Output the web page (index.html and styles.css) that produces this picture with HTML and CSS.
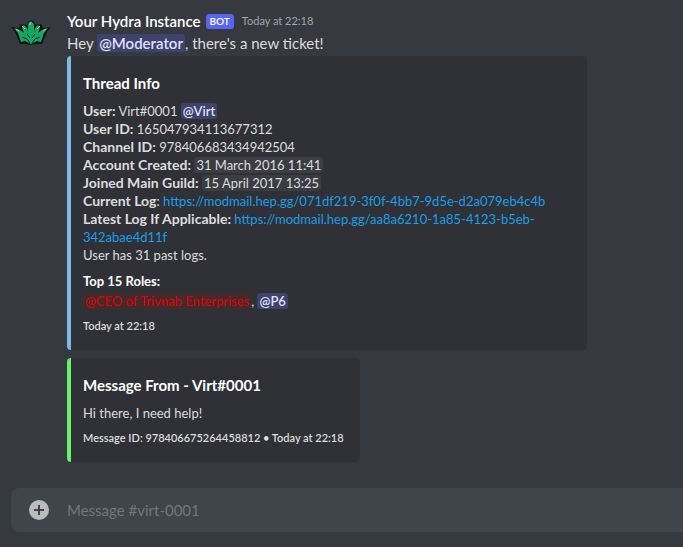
FILE: index.html
```html
<!DOCTYPE html>
<html lang="en">
<head>
    <meta charset="UTF-8">
    <meta name="viewport" content="width=device-width, initial-scale=1.0">
    <title>#virt-0001</title>
    <link rel="stylesheet" href="styles.css">
</head>
<body>
    <main class="chat">
        <!-- Bot message -->
        <article class="message">
            <svg class="avatar" viewBox="0 0 40 40" aria-hidden="true">
                <path class="crest-outline" d="M0 13 L8 14 L10 10 L16 11 L17 8 L20 6 L23 8 L24 11 L30 10 L32 14 L40 13 L36 18 L34 23 L31 30 L25 30 L20 31 L15 30 L9 30 L6 23 L4 18 Z"/>
                <path class="crest" d="M3 14 L9 16 L13 19 L11 13 L13 11 L16 14 L17 18 L17 10 L20 7 L23 10 L23 18 L24 14 L27 11 L29 13 L27 19 L31 16 L37 14 L33 19 L30 28 L26 27 L20 30 L14 27 L10 28 L7 19 Z"/>
                <path class="crest-lines" d="M11 23 L16 25 L19 29 M29 23 L24 25 L21 29 M16 20 L19 24 M24 20 L21 24"/>
                <path class="crest-shine" d="M11 12 L14 15 M29 12 L26 15 M19 8 V11 M5 15 L8 17 M35 15 L32 17"/>
            </svg>
            <div class="content">
                <header class="message-header">
                    <h1 class="username">Your Hydra Instance</h1>
                    <span class="bot-tag">BOT</span>
                    <time class="timestamp">Today at 22:18</time>
                </header>
                <p class="message-text">Hey <span class="mention">@Moderator</span>, there's a new ticket!</p>

                <!-- Thread embed -->
                <section class="embed embed-thread">
                    <h2 class="embed-title">Thread Info</h2>
                    <div class="embed-text">
                        <strong>User:</strong> Virt#0001 <span class="mention">@Virt</span><br>
                        <strong>User ID:</strong> 165047934113677312<br>
                        <strong>Channel ID:</strong> 978406683434942504<br>
                        <strong>Account Created:</strong> <time class="date">31 March 2016 11:41</time><br>
                        <strong>Joined Main Guild:</strong> <time class="date">15 April 2017 13:25</time><br>
                        <strong>Current Log</strong>: <a href="https://modmail.hep.gg/071df219-3f0f-4bb7-9d5e-d2a079eb4c4b">https://modmail.hep.gg/071df219-3f0f-4bb7-9d5e-d2a079eb4c4b</a><br>
                        <strong>Latest Log If Applicable:</strong> <a href="https://modmail.hep.gg/aa8a6210-1a85-4123-b5eb-342abae4d11f">https://modmail.hep.gg/aa8a6210-1a85-4123-b5eb-<wbr>342abae4d11f</a><br>
                        User has 31 past logs.
                    </div>
                    <h3 class="field-name">Top 15 Roles:</h3>
                    <p class="field-value"><span class="mention mention-red">@CEO of Trivnab Enterprises</span>, <span class="mention">@P6</span></p>
                    <footer class="embed-footer">Today at 22:18</footer>
                </section>

                <!-- Forwarded message embed -->
                <section class="embed embed-message">
                    <h2 class="embed-title">Message From - Virt#0001</h2>
                    <p class="embed-text">Hi there, I need help!</p>
                    <footer class="embed-footer">Message ID: 978406675264458812 • Today at 22:18</footer>
                </section>
            </div>
        </article>

        <!-- Message box -->
        <form class="composer">
            <button type="button" class="attach" aria-label="Upload a file">
                <svg viewBox="0 0 20 20" aria-hidden="true">
                    <circle cx="10" cy="10" r="10"/>
                    <path d="M10 5 V15 M5 10 H15"/>
                </svg>
            </button>
            <input type="text" class="composer-input" placeholder="Message #virt-0001" aria-label="Message #virt-0001">
        </form>
    </main>
</body>
</html>
```

FILE: styles.css
```css
* {
    box-sizing: border-box;
}

body {
    margin: 0;
    background-color: #36393f;
    color: #dcddde;
    font-family: Lato, "Noto Sans", sans-serif;
    font-size: 15px;
    line-height: 22px;
}

h1, h2, h3, p {
    margin: 0;
}

a {
    color: #1a9fe8;
    text-decoration: none;
}

a:hover {
    text-decoration: underline;
}

.chat {
    display: flex;
    flex-direction: column;
    justify-content: space-between;
    min-height: 100vh;
    padding: 10px 0 15px 11px;
}

/* Message */
.message {
    display: flex;
    gap: 16px;
    padding-right: 16px;
}

.avatar {
    flex: none;
    width: 40px;
    height: 40px;
    margin-top: 4px;
}

.crest-outline {
    fill: #101614;
}

.crest {
    fill: #18a566;
}

.crest-lines {
    fill: none;
    stroke: #0b3a28;
    stroke-width: 1;
}

.crest-shine {
    fill: none;
    stroke: #b8d99a;
    stroke-width: 1;
}

.content {
    flex: 1;
    min-width: 0;
}

.message-header {
    display: flex;
    align-items: center;
}

.username {
    color: #fff;
    font-size: 15px;
    font-weight: 600;
    line-height: 22px;
}

.bot-tag {
    margin: 0 8px 0 5px;
    padding: 0 4px;
    border-radius: 3px;
    background-color: #5865f2;
    color: #fff;
    font-size: 10px;
    font-weight: 600;
    line-height: 15px;
}

.timestamp {
    color: #a3a6aa;
    font-size: 11px;
}

.mention {
    padding: 0 2px;
    border-radius: 3px;
    background-color: #3f426b;
    color: #dee0fc;
    font-weight: 600;
}

.mention-red {
    background-color: #432a2d;
    color: #e00000;
    font-weight: 400;
}

/* Embeds */
.embed {
    width: fit-content;
    max-width: 520px;
    margin-top: 2px;
    padding: 16px 16px 16px 12px;
    border-left: 4px solid;
    border-radius: 4px;
    background-color: #2f3136;
}

.embed + .embed {
    margin-top: 8px;
}

.embed-thread {
    width: 100%;
    border-color: #7cb9e8;
}

.embed-message {
    border-color: #66f266;
}

.embed-title {
    color: #fff;
    font-size: 15px;
    font-weight: 700;
    line-height: 22px;
}

.embed-text {
    margin-top: 8px;
    font-size: 13px;
    line-height: 18px;
}

.embed-text strong {
    font-size: 14px;
    line-height: 16px;
}

.date {
    padding: 0 2px;
    border-radius: 3px;
    background-color: #3b3d42;
}

.field-name {
    margin-top: 8px;
    color: #fff;
    font-size: 13px;
    line-height: 18px;
}

.field-value {
    margin-top: 2px;
    font-size: 13px;
    line-height: 18px;
}

.embed-footer {
    margin-top: 8px;
    font-size: 11px;
    font-weight: 600;
    line-height: 16px;
}

/* Message box */
.composer {
    display: flex;
    align-items: center;
    height: 44px;
    border-radius: 8px 0 0 8px;
    background-color: #40444b;
}

.attach {
    display: flex;
    padding: 10px 18px;
    border: none;
    background: none;
    cursor: pointer;
}

.attach svg {
    width: 20px;
    height: 20px;
}

.attach circle {
    fill: #b9bbbe;
}

.attach path {
    stroke: #40444b;
    stroke-width: 2;
}

.composer-input {
    flex: 1;
    min-width: 0;
    padding: 0;
    border: none;
    outline: none;
    background: none;
    color: #dcddde;
    font: inherit;
}

.composer-input::placeholder {
    color: #72767d;
}
```
